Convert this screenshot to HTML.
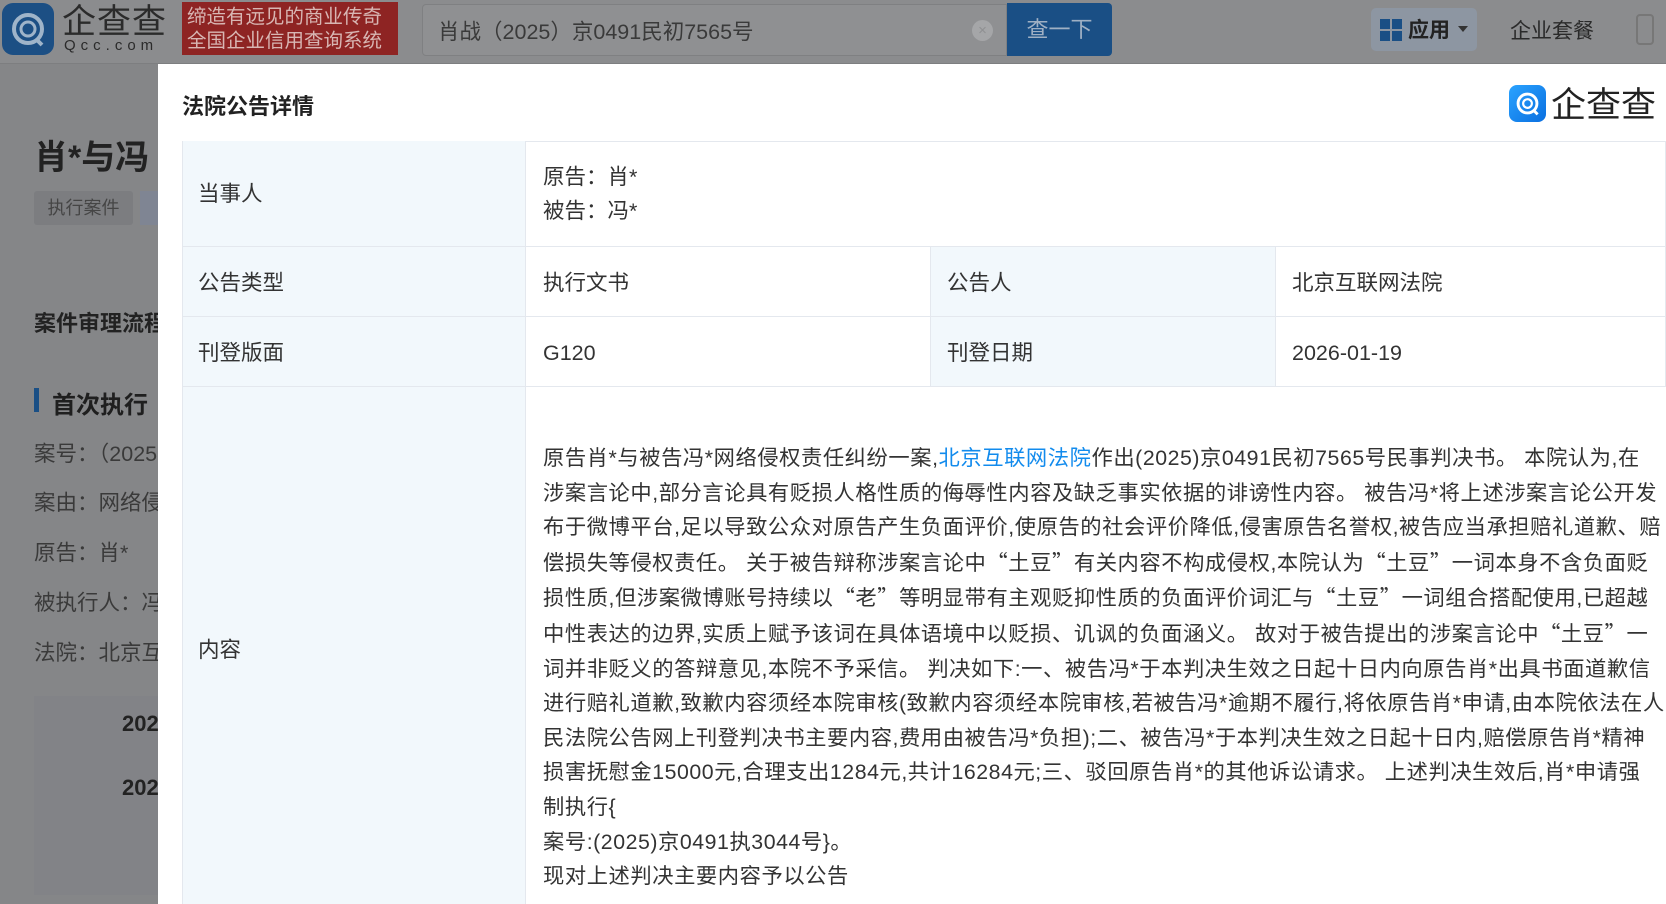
<!DOCTYPE html>
<html><head><meta charset="utf-8"><style>
*{margin:0;padding:0;box-sizing:border-box}
body{width:1666px;height:895px;overflow:hidden;background:#858688;font-family:"Liberation Sans","Noto Sans CJK SC",sans-serif;color:#333;position:relative}
.a{position:absolute;white-space:nowrap}
.top{position:absolute;left:0;top:0;width:1666px;height:64px;background:#8b8c8e;border-bottom:1px solid #7d7e80}
.modal{position:absolute;left:158px;top:64px;width:1508px;height:840px;background:#fff;overflow:hidden}
.cell{position:absolute;border-right:1px solid #e4e8ee;border-bottom:1px solid #e4e8ee}
.lab{background:#f2f8fc}
.t{font-size:21.5px;color:#333;line-height:30px}
.c{font-size:21.3px;color:#333;line-height:34.6px;letter-spacing:0.55px}
.q{font-family:"Noto Sans CJK SC",sans-serif}
</style></head><body>
<div class="top">
  <div class="a" style="left:2px;top:3px;width:52px;height:52px;border-radius:11px;background:#1c4f84"></div>
  <svg class="a" style="left:8px;top:9px" width="40" height="40" viewBox="0 0 40 40"><circle cx="20" cy="20" r="14" fill="none" stroke="#9fb4c9" stroke-width="4"/><circle cx="20" cy="20" r="7" fill="none" stroke="#9fb4c9" stroke-width="3"/><path d="M28 30 L34 36" stroke="#9fb4c9" stroke-width="4"/></svg>
  <div class="a" style="left:62px;top:-6px;font-size:34px;color:#2b2b2b;letter-spacing:1px">企查查</div>
  <div class="a" style="left:64px;top:38px;font-size:15px;line-height:16px;color:#2b2b2b;letter-spacing:5px">Qcc.com</div>
  <div class="a" style="left:182px;top:2px;width:216px;height:53px;background:#8e2423"></div>
  <div class="a" style="left:187px;top:5px;font-size:19.5px;line-height:24px;color:#d8b6b3">缔造有远见的商业传奇<br>全国企业信用查询系统</div>
  <div class="a" style="left:422px;top:4px;width:585px;height:52px;background:#8f9092;border:1px solid #7f8082;border-radius:4px 0 0 4px"></div>
  <div class="a" style="left:438px;top:15px;font-size:21.5px;color:#3a3a3a">肖战<span class="q">（</span>2025<span class="q">）</span>京0491民初7565号</div>
  <div class="a" style="left:972px;top:20px;width:21px;height:21px;border-radius:50%;background:#a5a6a8;color:#8f9092;font-size:15px;line-height:21px;text-align:center">×</div>
  <div class="a" style="left:1007px;top:3px;width:105px;height:53px;background:#1a4f85;border-radius:0 4px 4px 0;color:#9fb0c4;font-size:22px;text-align:center;line-height:53px">查一下</div>
  <div class="a" style="left:1371px;top:8px;width:106px;height:43px;background:#8d96a2;border-radius:5px"></div>
  <div class="a" style="left:1380px;top:19px;width:10px;height:10px;background:#1a4f85;box-shadow:12px 0 #1a4f85,0 12px #1a4f85,12px 12px #1a4f85"></div>
  <div class="a" style="left:1408px;top:14px;font-size:21px;font-weight:bold;color:#222">应用</div>
  <div class="a" style="left:1458px;top:26px;border-left:5px solid transparent;border-right:5px solid transparent;border-top:6px solid #333"></div>
  <div class="a" style="left:1510px;top:15px;font-size:21px;color:#2a2a2a">企业套餐</div>
  <div class="a" style="left:1636px;top:14px;width:18px;height:31px;border:2px solid #777;border-radius:4px"></div>
</div>
<div class="a" style="left:34px;top:130px;font-size:34px;font-weight:bold;color:#222">肖*与冯</div>
<div class="a" style="left:34px;top:191px;width:99px;height:34px;background:#7c7d80;border-radius:3px;color:#454545;font-size:18px;text-align:center;line-height:34px">执行案件</div>
<div class="a" style="left:140px;top:191px;width:20px;height:34px;background:#7f8593"></div>
<div class="a" style="left:34px;top:306px;font-size:22px;font-weight:bold;color:#222">案件审理流程</div>
<div class="a" style="left:34px;top:388px;width:5px;height:24px;background:#1a4f85"></div>
<div class="a" style="left:52px;top:385px;font-size:24px;font-weight:bold;color:#1f1f1f">首次执行</div>
<div class="a t" style="left:34px;top:438px;color:#3a3a3a">案号：<span class="q">（</span>2025</div>
<div class="a t" style="left:34px;top:488px;color:#3a3a3a">案由：网络侵</div>
<div class="a t" style="left:34px;top:538px;color:#3a3a3a">原告：肖*</div>
<div class="a t" style="left:34px;top:588px;color:#3a3a3a">被执行人：冯</div>
<div class="a t" style="left:34px;top:638px;color:#3a3a3a">法院：北京互</div>
<div class="a" style="left:34px;top:696px;width:130px;height:199px;background:#828387"></div>
<div class="a" style="left:122px;top:711px;font-size:22px;font-weight:bold;color:#222">202</div>
<div class="a" style="left:122px;top:775px;font-size:22px;font-weight:bold;color:#222">202</div>

<div class="modal">
  <div class="a" style="left:24px;top:25px;font-size:22px;font-weight:bold;color:#222">法院公告详情</div>
  <div class="a" style="left:1351px;top:21px;width:37px;height:37px;border-radius:8px;background:linear-gradient(135deg,#2aa3ff,#0a6fe0)"></div>
  <svg class="a" style="left:1355px;top:25px" width="29" height="29" viewBox="0 0 40 40"><circle cx="20" cy="20" r="13" fill="none" stroke="#fff" stroke-width="4"/><circle cx="20" cy="20" r="6" fill="none" stroke="#fff" stroke-width="3"/><path d="M28 29 L34 35" stroke="#fff" stroke-width="4"/></svg>
  <div class="a" style="left:1393px;top:13px;font-size:35px;color:#222">企查查</div>
  <div class="a" style="left:24px;top:77px;width:1484px;height:1px;background:#e4e8ee"></div>
  <div class="cell lab" style="left:24px;top:77px;width:344px;height:106px;border-left:1px solid #e4e8ee"></div>
  <div class="cell" style="left:368px;top:77px;width:1140px;height:106px"></div>
  <div class="cell lab" style="left:24px;top:183px;width:344px;height:70px;border-left:1px solid #e4e8ee"></div>
  <div class="cell" style="left:368px;top:183px;width:405px;height:70px"></div>
  <div class="cell lab" style="left:773px;top:183px;width:345px;height:70px"></div>
  <div class="cell" style="left:1118px;top:183px;width:390px;height:70px"></div>
  <div class="cell lab" style="left:24px;top:253px;width:344px;height:70px;border-left:1px solid #e4e8ee"></div>
  <div class="cell" style="left:368px;top:253px;width:405px;height:70px"></div>
  <div class="cell lab" style="left:773px;top:253px;width:345px;height:70px"></div>
  <div class="cell" style="left:1118px;top:253px;width:390px;height:70px"></div>
  <div class="cell lab" style="left:24px;top:323px;width:344px;height:540px;border-left:1px solid #e4e8ee"></div>

  <div class="a t" style="left:40px;top:115px">当事人</div>
  <div class="a t" style="left:385px;top:98px">原告：肖*</div>
  <div class="a t" style="left:385px;top:132px">被告：冯*</div>
  <div class="a t" style="left:40px;top:204px">公告类型</div>
  <div class="a t" style="left:385px;top:204px">执行文书</div>
  <div class="a t" style="left:789px;top:204px">公告人</div>
  <div class="a t" style="left:1134px;top:204px">北京互联网法院</div>
  <div class="a t" style="left:40px;top:274px">刊登版面</div>
  <div class="a t" style="left:385px;top:274px">G120</div>
  <div class="a t" style="left:789px;top:274px">刊登日期</div>
  <div class="a t" style="left:1134px;top:274px">2026-01-19</div>
  <div class="a t" style="left:40px;top:571px">内容</div>
  <div class="a c" style="left:385px;top:377px">
原告肖*与被告冯*网络侵权责任纠纷一案,<span style="color:#128bed">北京互联网法院</span>作出(2025)京0491民初7565号民事判决书。 本院认为,在<br>
涉案言论中,部分言论具有贬损人格性质的侮辱性内容及缺乏事实依据的诽谤性内容。 被告冯*将上述涉案言论公开发<br>
布于微博平台,足以导致公众对原告产生负面评价,使原告的社会评价降低,侵害原告名誉权,被告应当承担赔礼道歉、赔<br>
偿损失等侵权责任。 关于被告辩称涉案言论中<span class="q">“</span>土豆<span class="q">”</span>有关内容不构成侵权,本院认为<span class="q">“</span>土豆<span class="q">”</span>一词本身不含负面贬<br>
损性质,但涉案微博账号持续以<span class="q">“</span>老<span class="q">”</span>等明显带有主观贬抑性质的负面评价词汇与<span class="q">“</span>土豆<span class="q">”</span>一词组合搭配使用,已超越<br>
中性表达的边界,实质上赋予该词在具体语境中以贬损、讥讽的负面涵义。 故对于被告提出的涉案言论中<span class="q">“</span>土豆<span class="q">”</span>一<br>
词并非贬义的答辩意见,本院不予采信。 判决如下:一、被告冯*于本判决生效之日起十日内向原告肖*出具书面道歉信<br>
进行赔礼道歉,致歉内容须经本院审核(致歉内容须经本院审核,若被告冯*逾期不履行,将依原告肖*申请,由本院依法在人<br>
民法院公告网上刊登判决书主要内容,费用由被告冯*负担);二、被告冯*于本判决生效之日起十日内,赔偿原告肖*精神<br>
损害抚慰金15000元,合理支出1284元,共计16284元;三、驳回原告肖*的其他诉讼请求。 上述判决生效后,肖*申请强<br>
制执行{<br>
案号:(2025)京0491执3044号}。<br>
现对上述判决主要内容予以公告</div>
</div>
</body></html>
